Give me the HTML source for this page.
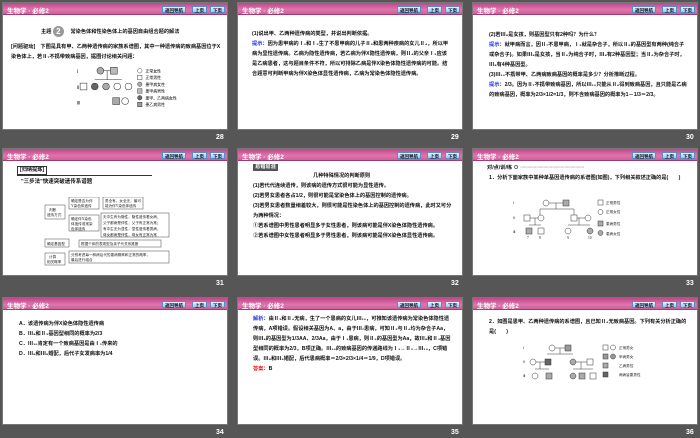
<!DOCTYPE html>
<html><head><meta charset="utf-8"><style>
*{margin:0;padding:0;box-sizing:border-box}
body{width:700px;height:438px;background:#565656;position:relative;overflow:hidden;font-family:"Liberation Sans","Noto Sans CJK SC",sans-serif}
.s{position:absolute;width:226px;height:128px;background:#fff;overflow:hidden;border:1px solid #777}
.h{height:12px;background:linear-gradient(#bf4589,#de76ad 60%,#d05e9a);position:relative;border-bottom:1px solid #a03a70}
.h .t{position:absolute;left:4px;top:2px;font-size:6.5px;color:#fff;font-weight:bold}
.b{position:absolute;top:3px;height:7px;font-size:4.5px;line-height:7px;text-align:center;color:#111;font-weight:bold;background:linear-gradient(#e8f2ff,#9cc6f0);border:1px solid #5a8cc8}
.n{position:absolute;font-size:7px;color:#fff;font-weight:bold}
.c{position:absolute;font-size:5.2px;line-height:10px;font-weight:bold;color:#111;font-family:"Liberation Sans","Noto Sans CJK SC",sans-serif}
.bl{color:#1a2fe0}.rd{color:#e01010}
</style></head><body>

<div class="s" style="left:2px;top:2px">
<div class="h"><span class="t">生物学 · 必修2</span><span class="b" style="left:159px;width:24px">返回导航</span><span class="b" style="left:189px;width:15px">上页</span><span class="b" style="left:207px;width:15px">下页</span></div>
<div class="c" style="left:38px;top:23px">主题 <span style="display:inline-block;width:11px;height:11px;border-radius:50%;background:#999;color:#fff;text-align:center;line-height:11px;font-size:8px;vertical-align:middle">2</span> 　常染色体和性染色体上的基因自由组合题的解法</div>
<div class="c" style="left:8px;top:39px;width:212px">[问题驱动]　下图是具有甲、乙两种遗传病的家族系谱图，其中一种遗传病的致病基因位于X染色体上，若Ⅱ₇不携带致病基因，据图讨论相关问题：</div>
<svg style="position:absolute;left:66px;top:61px" width="110" height="45" viewBox="0 0 92 40" font-size="4" font-family="Liberation Sans">
<text x="4" y="8">Ⅰ</text><text x="4" y="22">Ⅱ</text><text x="4" y="36">Ⅲ</text>
<circle cx="25" cy="6" r="3" fill="#aaa" stroke="#333" stroke-width=".5"/><rect x="34" y="3" width="6" height="6" fill="#bbb" stroke="#333" stroke-width=".5"/>
<line x1="28" y1="6" x2="34" y2="6" stroke="#333" stroke-width=".5"/><line x1="31" y1="6" x2="31" y2="14" stroke="#333" stroke-width=".5"/><line x1="20" y1="14" x2="44" y2="14" stroke="#333" stroke-width=".5"/>
<rect x="7" y="17" width="6" height="6" fill="#fff" stroke="#333" stroke-width=".5"/><circle cx="20" cy="20" r="3" fill="#666" stroke="#333" stroke-width=".5"/><circle cx="30" cy="20" r="3" fill="#aaa" stroke="#333" stroke-width=".5"/><circle cx="40" cy="20" r="3" fill="#fff" stroke="#333" stroke-width=".5"/><circle cx="50" cy="20" r="3" fill="#fff" stroke="#333" stroke-width=".5"/>
<rect x="36" y="30" width="6" height="6" fill="#aaa" stroke="#333" stroke-width=".5"/><circle cx="47" cy="33" r="3" fill="#fff" stroke="#333" stroke-width=".5"/>
<g font-size="3.5"><circle cx="60" cy="6" r="2" fill="#fff" stroke="#333" stroke-width=".4"/><text x="65" y="7.5">正常女性</text>
<rect x="58" y="10" width="4" height="4" fill="#fff" stroke="#333" stroke-width=".4"/><text x="65" y="13.5">正常男性</text>
<circle cx="60" cy="18" r="2" fill="#aaa" stroke="#333" stroke-width=".4"/><text x="65" y="19.5">患甲病女性</text>
<rect x="58" y="22" width="4" height="4" fill="#bbb" stroke="#333" stroke-width=".4"/><text x="65" y="25.5">患甲病男性</text>
<circle cx="60" cy="30" r="2" fill="#666" stroke="#333" stroke-width=".4"/><text x="65" y="31.5">患甲、乙两病女性</text>
<rect x="58" y="34" width="4" height="4" fill="#999" stroke="#333" stroke-width=".4"/><text x="65" y="37.5">患乙病男性</text></g>
</svg>
</div>
<div class="n" style="left:216px;top:134px">28</div>

<div class="s" style="left:237px;top:2px">
<div class="h"><span class="t">生物学 · 必修2</span><span class="b" style="left:159px;width:24px">返回导航</span><span class="b" style="left:189px;width:15px">上页</span><span class="b" style="left:207px;width:15px">下页</span></div>
<div class="c" style="left:14px;top:26px;width:200px">(1)说出甲、乙两种遗传病的类型，并说出判断依据。<br><span class="bl">提示：</span>因为患甲病的Ⅰ₁和Ⅰ₂生了不患甲病的儿子Ⅱ₅和患两种疾病的女儿Ⅱ₄，所以甲病为显性遗传病。乙病为隐性遗传病，若乙病为伴X隐性遗传病，则Ⅱ₄的父亲Ⅰ₂应该是乙病患者，这与题目条件不符，所以可排除乙病是伴X染色体隐性遗传病的可能。结合题意可判断甲病为伴X染色体显性遗传病，乙病为常染色体隐性遗传病。</div>
</div>
<div class="n" style="left:451px;top:134px">29</div>

<div class="s" style="left:472px;top:2px">
<div class="h"><span class="t">生物学 · 必修2</span><span class="b" style="left:159px;width:24px">返回导航</span><span class="b" style="left:189px;width:15px">上页</span><span class="b" style="left:207px;width:15px">下页</span></div>
<div class="c" style="left:16px;top:27px;width:200px">(2)若Ⅲ₈是女孩，则基因型只有2种吗？为什么？<br><span class="bl">提示：</span>就甲病而言，因Ⅱ₇不患甲病，Ⅰ₂就是杂合子，所以Ⅱ₆的基因型有两种(纯合子或杂合子)。如果Ⅲ₈是女孩，当Ⅱ₆为纯合子时，Ⅲ₈有2种基因型；当Ⅱ₆为杂合子时，Ⅲ₈有4种基因型。<br>(3)Ⅲ₁₀不携带甲、乙两病致病基因的概率是多少？分析推断过程。<br><span class="bl">提示：</span>2/3。因为Ⅱ₇不携带致病基因，所以Ⅲ₁₀只能从Ⅱ₆得到致病基因，且只能是乙病的致病基因，概率为2/3×1/2=1/3，则不含致病基因的概率为1－1/3＝2/3。</div>
</div>
<div class="n" style="left:686px;top:134px">30</div>

<div class="s" style="left:2px;top:148px">
<div class="h"><span class="t">生物学 · 必修2</span><span class="b" style="left:159px;width:24px">返回导航</span><span class="b" style="left:189px;width:15px">上页</span><span class="b" style="left:207px;width:15px">下页</span></div>
<div class="c" style="left:14px;top:17px;border:1px solid #333;line-height:7px;padding:0 2px">[归纳提炼]</div>
<div style="position:absolute;left:14px;top:26px;width:135px;border-top:1px solid #333"></div>
<div class="c" style="left:18px;top:28px;font-size:5.5px">"三步法"快速突破遗传系谱题</div>
<svg style="position:absolute;left:38px;top:48px" width="140" height="72" font-size="3.6" font-family="Liberation Serif" fill="#222">
<g fill="#fff" stroke="#444" stroke-width=".5">
<rect x="4" y="8" width="20" height="14"/><rect x="28" y="0" width="30" height="12"/><rect x="62" y="0" width="40" height="12"/>
<rect x="28" y="18" width="30" height="16"/><rect x="60" y="16" width="68" height="24"/>
<rect x="4" y="42" width="24" height="8"/><rect x="38" y="43" width="82" height="7"/>
<rect x="4" y="56" width="20" height="12"/><rect x="28" y="54" width="100" height="12"/></g>
<text x="8" y="14">判断</text><text x="6" y="19">遗传方式</text><text x="30" y="5">确定是否为伴</text><text x="30" y="10">Y染色体遗传</text>
<text x="64" y="5">男全有、女全无，最可</text><text x="64" y="10">能为伴Y染色体遗传</text>
<text x="30" y="23">确定伴X染色</text><text x="30" y="28">体遗传或常染</text><text x="30" y="33">色体遗传</text>
<text x="62" y="21">无中生有为隐性，隐性遗传看女病，</text><text x="62" y="27">父子都病是伴性，父子有正常为常；</text><text x="62" y="33">有中生无为显性，显性遗传看男病，</text><text x="62" y="39">母女都病是伴性，母女有正常为常</text>
<text x="6" y="48">确定基因型</text><text x="40" y="48">根据个体的表现型及亲子代关系推断</text>
<text x="8" y="61">计算</text><text x="6" y="66">相关概率</text><text x="30" y="59">分别考虑每一种病后代的患病概率和正常的概率，</text><text x="30" y="64">最后进行组合</text>
</svg>
</div>
<div class="n" style="left:216px;top:280px">31</div>

<div class="s" style="left:237px;top:148px">
<div class="h"><span class="t">生物学 · 必修2</span><span class="b" style="left:159px;width:24px">返回导航</span><span class="b" style="left:189px;width:15px">上页</span><span class="b" style="left:207px;width:15px">下页</span></div>
<div class="c" style="left:15px;top:15px;background:#555;color:#fff;line-height:7px;padding:0 2px">易错易混</div>
<div class="c" style="left:75px;top:22px">几种特殊情况的判断原则</div>
<div class="c" style="left:15px;top:32px;width:200px">(1)若代代连续遗传，则该病的遗传方式很可能为显性遗传。<br>(2)若男女患者各占1/2，则很可能是常染色体上的基因控制的遗传病。<br>(3)若男女患者数量相差较大，则很可能是性染色体上的基因控制的遗传病，此时又可分为两种情况：<br>①若系谱图中男性患者明显多于女性患者，则该病可能是伴X染色体隐性遗传病。<br>②若系谱图中女性患者明显多于男性患者，则该病可能是伴X染色体显性遗传病。</div>
</div>
<div class="n" style="left:451px;top:280px">32</div>

<div class="s" style="left:472px;top:148px">
<div class="h"><span class="t">生物学 · 必修2</span><span class="b" style="left:159px;width:24px">返回导航</span><span class="b" style="left:189px;width:15px">上页</span><span class="b" style="left:207px;width:15px">下页</span></div>
<div class="c" style="left:14px;top:14px">对/点/训/练 ⊙ <span style="color:#999;letter-spacing:-0.5px">····················································</span></div>
<div class="c" style="left:16px;top:24px;width:200px">1．分析下面家族中某种单基因遗传病的系谱图(如图)，下列相关叙述正确的是(　　)</div>
<svg style="position:absolute;left:40px;top:48px" width="120" height="45" font-size="3.6" font-family="Liberation Serif" fill="#222">
<g stroke="#333" stroke-width=".5">
<line x1="36" y1="6" x2="50" y2="6"/><line x1="43" y1="6" x2="43" y2="12"/><line x1="27" y1="12" x2="61" y2="12"/><line x1="27" y1="12" x2="27" y2="18"/><line x1="61" y1="12" x2="61" y2="18"/>
<line x1="17" y1="21" x2="27" y2="21"/><line x1="22" y1="21" x2="22" y2="28"/><line x1="16" y1="28" x2="28" y2="28"/>
<line x1="61" y1="21" x2="72" y2="21"/><line x1="66" y1="21" x2="66" y2="28"/><line x1="55" y1="28" x2="77" y2="28"/>
<circle cx="33" cy="6" r="3" fill="#fff"/><rect x="50" y="3" width="6" height="6" fill="#aaa"/>
<rect x="11" y="18" width="6" height="6" fill="#fff"/><circle cx="28" cy="21" r="3" fill="#fff"/><rect x="58" y="18" width="6" height="6" fill="#fff"/><circle cx="75" cy="21" r="3" fill="#fff"/>
<rect x="13" y="31" width="6" height="6" fill="#aaa"/><rect x="25" y="31" width="6" height="6" fill="#fff"/><circle cx="55" cy="34" r="3" fill="#fff"/><circle cx="77" cy="34" r="3" fill="#aaa"/>
<rect x="85" y="3" width="5" height="5" fill="#fff"/><circle cx="87.5" cy="15" r="2.5" fill="#fff"/><rect x="85" y="24" width="5" height="5" fill="#aaa"/><circle cx="87.5" cy="36" r="2.5" fill="#aaa"/></g>
<text x="0" y="7">Ⅰ</text><text x="0" y="22">Ⅱ</text><text x="0" y="36">Ⅲ</text>
<text x="93" y="7">正常男性</text><text x="93" y="16">正常女性</text><text x="93" y="28">患病男性</text><text x="93" y="38">患病女性</text>
<text x="14" y="42">7</text><text x="26" y="42">8</text><text x="54" y="42">9</text><text x="75" y="42">10</text>
</svg>
</div>
<div class="n" style="left:686px;top:280px">33</div>

<div class="s" style="left:2px;top:297px">
<div class="h"><span class="t">生物学 · 必修2</span><span class="b" style="left:159px;width:24px">返回导航</span><span class="b" style="left:189px;width:15px">上页</span><span class="b" style="left:207px;width:15px">下页</span></div>
<div class="c" style="left:16px;top:21px;width:200px">A．该遗传病为伴X染色体隐性遗传病<br>B．Ⅲ₈和Ⅱ₃基因型相同的概率为2/3<br>C．Ⅲ₁₀肯定有一个致病基因是由Ⅰ₁传来的<br>D．Ⅲ₈和Ⅲ₉婚配，后代子女发病率为1/4</div>
</div>
<div class="n" style="left:216px;top:429px">34</div>

<div class="s" style="left:237px;top:297px">
<div class="h"><span class="t">生物学 · 必修2</span><span class="b" style="left:159px;width:24px">返回导航</span><span class="b" style="left:189px;width:15px">上页</span><span class="b" style="left:207px;width:15px">下页</span></div>
<div class="c" style="left:15px;top:16px;width:200px"><span class="bl">解析：</span>由Ⅱ₃和Ⅱ₄无病，生了一个患病的女儿Ⅲ₁₀，可推知该遗传病为常染色体隐性遗传病，A项错误。假设相关基因为A、a，由于Ⅲ₇患病，可知Ⅱ₃与Ⅱ₄均为杂合子Aa，则Ⅲ₈的基因型为1/3AA、2/3Aa，由于Ⅰ₁患病，则Ⅱ₃的基因型为Aa，故Ⅲ₈和Ⅱ₃基因型相同的概率为2/3，B项正确。Ⅲ₁₀的致病基因的传递路线为Ⅰ₁→Ⅱ₃→Ⅲ₁₀，C项错误。Ⅲ₈和Ⅲ₉婚配，后代患病概率＝2/3×2/3×1/4＝1/9，D项错误。<br><span class="rd">答案：</span>B</div>
</div>
<div class="n" style="left:451px;top:429px">35</div>

<div class="s" style="left:472px;top:297px">
<div class="h"><span class="t">生物学 · 必修2</span><span class="b" style="left:159px;width:24px">返回导航</span><span class="b" style="left:189px;width:15px">上页</span><span class="b" style="left:207px;width:15px">下页</span></div>
<div class="c" style="left:16px;top:19px;width:200px">2．如图是患甲、乙两种遗传病的系谱图，且已知Ⅱ₄无致病基因。下列有关分析正确的是(　　)</div>
<svg style="position:absolute;left:50px;top:44px" width="130" height="45" font-size="3.6" font-family="Liberation Serif" fill="#222">
<g stroke="#333" stroke-width=".5">
<line x1="32" y1="6" x2="42" y2="6"/><line x1="37" y1="6" x2="37" y2="12"/><line x1="24" y1="12" x2="50" y2="12"/>
<line x1="13" y1="20" x2="22" y2="20"/><line x1="17" y1="20" x2="17" y2="27"/><line x1="12" y1="27" x2="26" y2="27"/>
<line x1="53" y1="20" x2="64" y2="20"/><line x1="58" y1="20" x2="58" y2="27"/><line x1="50" y1="27" x2="70" y2="27"/>
<circle cx="29" cy="6" r="3" fill="#fff"/><rect x="42" y="3" width="6" height="6" fill="#999"/>
<circle cx="10" cy="20" r="3" fill="#fff"/><rect x="22" y="17" width="6" height="6" fill="#666"/><circle cx="50" cy="20" r="3" fill="#aaa"/><rect x="64" y="17" width="6" height="6" fill="#fff"/>
<circle cx="12" cy="34" r="3" fill="#fff"/><rect x="23" y="31" width="6" height="6" fill="#aaa"/><circle cx="50" cy="34" r="3" fill="#aaa"/><rect x="56" y="31" width="6" height="6" fill="#aaa"/><rect x="67" y="31" width="6" height="6" fill="#fff"/>
<rect x="80" y="3" width="5" height="5" fill="#fff"/><circle cx="90" cy="5.5" r="2.5" fill="#fff"/><rect x="80" y="12" width="5" height="5" fill="#999"/><circle cx="90" cy="14.5" r="2.5" fill="#999"/><rect x="80" y="21" width="5" height="5" fill="#aaa"/><rect x="80" y="30" width="5" height="5" fill="#666"/></g>
<text x="0" y="7">Ⅰ</text><text x="0" y="21">Ⅱ</text><text x="0" y="35">Ⅲ</text>
<text x="96" y="7">正常男女</text><text x="96" y="16">甲病男女</text><text x="96" y="25">乙病男性</text><text x="96" y="34">两病皆患男性</text>
</svg>
</div>
<div class="n" style="left:686px;top:429px">36</div>
</body></html>
